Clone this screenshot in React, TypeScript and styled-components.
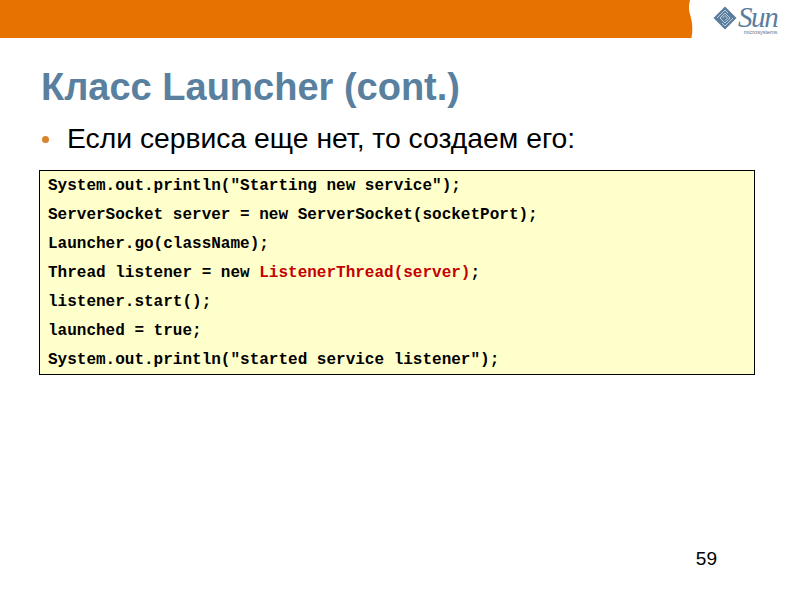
import React from 'react'
import styled, { createGlobalStyle } from 'styled-components'

const GlobalStyle = createGlobalStyle`
  html, body {
    margin: 0;
    padding: 0;
    background: #fff;
  }
`

const Slide = styled.div`
  width: 794px;
  height: 595px;
  overflow: hidden;
  display: flex;
  flex-direction: column;
  font-family: 'Liberation Sans', Arial, sans-serif;
  background: #fff;
`

const Header = styled.header`
  height: 38px;
  display: flex;
  align-items: flex-start;
  flex-shrink: 0;
`

const Band = styled.div`
  width: 688px;
  height: 38px;
  background: #e87200;
`

const BandEdge = styled.svg`
  width: 6px;
  height: 38px;
  display: block;
`

const Logo = styled.div`
  margin-left: 19px;
  margin-top: 6px;
  display: flex;
  align-items: flex-start;
  gap: 1px;
`

const LogoWords = styled.div`
  display: flex;
  flex-direction: column;
  align-items: flex-end;
`

const LogoName = styled.span`
  font-family: 'Liberation Serif', serif;
  font-style: italic;
  font-size: 29px;
  line-height: 23px;
  letter-spacing: -1.4px;
  color: #5a7d9e;
`

const LogoSub = styled.span`
  font-size: 5.5px;
  line-height: 6px;
  color: #5f7389;
`

const Title = styled.h1`
  margin: 27px 0 0 41px;
  font-size: 38px;
  line-height: 44px;
  font-weight: bold;
  color: #59819f;
`

const Bullet = styled.div`
  margin: 12px 0 0 41px;
  display: flex;
  align-items: center;
  font-size: 28.3px;
  line-height: 34px;
  color: #000;
`

const Dot = styled.span`
  width: 7px;
  height: 7px;
  border-radius: 50%;
  background: #d9822b;
  margin: 3px 18px 0 1px;
  flex-shrink: 0;
`

const CodeBox = styled.div`
  margin: 15px 0 0 39px;
  width: 716px;
  height: 205px;
  box-sizing: border-box;
  border: 1px solid #000;
  background: #ffffcc;
  padding: 0 0 0 8px;
  display: flex;
  flex-direction: column;
  justify-content: space-around;
`

const CodeLine = styled.div`
  font-family: 'Liberation Mono', 'Courier New', monospace;
  font-weight: bold;
  font-size: 16px;
  line-height: 18px;
  white-space: pre;
  color: #000;
`

const Accent = styled.span`
  color: #c40000;
`

const PageNumber = styled.div`
  margin: auto 77px 25px auto;
  font-size: 19px;
  line-height: 22px;
  color: #000;
`

const SunMark = () => (
  <svg width="24" height="24" viewBox="0 0 24 24">
    <path d="M12 0.5 L23.5 12 L12 23.5 L0.5 12 Z" fill="#5a7d9e" />
    <g fill="none" stroke="#c9d7e3" strokeWidth="0.9">
      <path d="M7 12 L12 7 L17 12 L12 17 Z" />
      <path d="M4 12 L12 4 L15 7" />
      <path d="M20 12 L12 20 L9 17" />
      <path d="M9.5 12 L12 9.5 L14.5 12 L12 14.5" />
    </g>
  </svg>
)

const App: React.FC = () => {
  return (
    <Slide>
      <GlobalStyle />
      <Header>
        <Band />
        <BandEdge viewBox="0 0 6 38">
          <path d="M0 0 H2 C0.5 6 0.5 10 2.5 16 C4.5 23 5 31 3.5 38 H0 Z" fill="#e87200" />
        </BandEdge>
        <Logo>
          <SunMark />
          <LogoWords>
            <LogoName>Sun</LogoName>
            <LogoSub>microsystems</LogoSub>
          </LogoWords>
        </Logo>
      </Header>
      <Title>Класс Launcher (cont.)</Title>
      <Bullet>
        <Dot />
        Если сервиса еще нет, то создаем его:
      </Bullet>
      <CodeBox>
        <CodeLine>System.out.println("Starting new service");</CodeLine>
        <CodeLine>ServerSocket server = new ServerSocket(socketPort);</CodeLine>
        <CodeLine>Launcher.go(className);</CodeLine>
        <CodeLine>
          Thread listener = new <Accent>ListenerThread(server)</Accent>;
        </CodeLine>
        <CodeLine>listener.start();</CodeLine>
        <CodeLine>launched = true;</CodeLine>
        <CodeLine>System.out.println("started service listener");</CodeLine>
      </CodeBox>
      <PageNumber>59</PageNumber>
    </Slide>
  )
}

export default App
